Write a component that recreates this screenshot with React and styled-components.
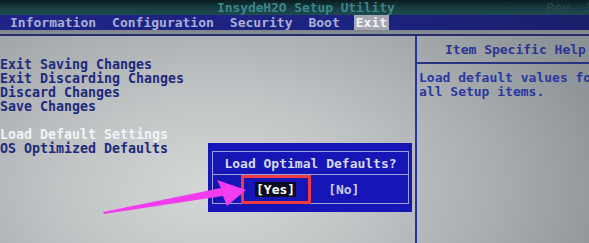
import React from "react";
import styled, { createGlobalStyle } from "styled-components";

const Global = createGlobalStyle`
  html, body { margin: 0; padding: 0; background: #8e9398; }
  body { width: 589px; height: 243px; overflow: hidden; }
`;

const mono = `"DejaVu Sans Mono", "Liberation Mono", monospace`;

const Screen = styled.div`
  position: relative;
  width: 589px;
  height: 243px;
  overflow: hidden;
  display: flex;
  flex-direction: column;
  font-family: ${mono};
  font-weight: bold;
  font-size: 13px;
  background:
    radial-gradient(ellipse 420px 260px at 36% 78%, #d5d7d7 0%, #c2c5c6 35%, #a7abae 70%, #8c9196 100%);
`;

const TitleBar = styled.div`
  height: 15px;
  flex: none;
  display: flex;
  align-items: center;
  background: linear-gradient(180deg, #0b1c20 0%, #183e42 55%, #1f4a4f 100%);
  color: #3c8688;
  line-height: 15px;
  white-space: nowrap;
`;

const Title = styled.span`
  margin-left: 217px;
  letter-spacing: -0.1px;
`;

const Rev = styled.span`
  margin-left: auto;
  margin-right: -20px;
  color: #28494c;
  font-weight: normal;
`;

const MenuBar = styled.div`
  height: 15px;
  flex: none;
  display: flex;
  align-items: center;
  gap: 16px;
  padding-left: 10px;
  background: linear-gradient(90deg, #1f2486 0%, #1d2380 60%, #1a1f6a 100%);
  color: #a9afd6;
  line-height: 15px;
  white-space: nowrap;
`;

const MenuItem = styled.span`
  padding: 0 ${(p) => (p.$active ? "2px" : "0")};
  margin: 0 ${(p) => (p.$active ? "-2px" : "0")};
  background: ${(p) => (p.$active ? "#a3a7b2" : "transparent")};
  color: ${(p) => (p.$active ? "#f4f4f8" : "#a9afd6")};
`;

const Gap = styled.div`
  height: 4px;
  flex: none;
  background: linear-gradient(180deg, #7f848c, #8b9096);
`;

const Body = styled.div`
  flex: 1;
  display: grid;
  grid-template-columns: 415px 2px 1fr;
  border-top: 2px solid #252c6c;
  min-height: 0;
`;

const LeftPanel = styled.div`
  position: relative;
  padding-top: 22px;
  font-size: 13.3px;
`;

const Item = styled.div`
  height: 14px;
  line-height: 14px;
  white-space: nowrap;
  color: ${(p) => (p.$selected ? "#f2f3f6" : "#1e2a7c")};
`;

const Divider = styled.div`
  background: #2435a6;
`;

const RightPanel = styled.div`
  display: flex;
  flex-direction: column;
  white-space: nowrap;
  overflow: hidden;
`;

const HelpHeader = styled.div`
  height: 26px;
  padding-left: 28px;
  display: flex;
  align-items: center;
  color: #2a3492;
  border-bottom: 2px solid #2a3380;
`;

const HelpText = styled.div`
  padding: 7px 0 0 2px;
  line-height: 14px;
  color: #2a38a0;
`;

const Dialog = styled.div`
  position: absolute;
  left: 208px;
  top: 107px;
  width: 197px;
  height: 53px;
  padding: 8px 3px 8px 4px;
  background: #1616b6;
  font-size: 13px;
`;

const DialogInner = styled.div`
  height: 51px;
  border: 1px solid #9aa0dc;
  display: flex;
  flex-direction: column;
`;

const DialogTitle = styled.div`
  height: 22px;
  display: flex;
  align-items: center;
  justify-content: center;
  color: #d6daf2;
  border-bottom: 1px solid #9aa0dc;
`;

const Buttons = styled.div`
  flex: 1;
  display: flex;
  align-items: center;
  gap: 31px;
  padding-left: 42px;
`;

const Button = styled.span`
  position: relative;
  line-height: 15px;
  padding: 0 1px;
  color: ${(p) => (p.$focused ? "#ffffff" : "#c8cdf0")};
  background: ${(p) => (p.$focused ? "#0b0b22" : "transparent")};

  ${(p) =>
    p.$focused &&
    `
    &::after {
      content: "";
      position: absolute;
      left: -14px;
      right: -15px;
      top: -7px;
      bottom: -7px;
      border: 3px solid #ef3b3f;
    }
  `}
`;

const ArrowLayer = styled.svg`
  position: absolute;
  left: 0;
  top: 0;
  pointer-events: none;
`;

export default function App() {
  return (
    <>
      <Global />
      <Screen>
        <TitleBar>
          <Title>InsydeH2O Setup Utility</Title>
          <Rev>Rev. 3.7</Rev>
        </TitleBar>
        <MenuBar>
          <MenuItem>Information</MenuItem>
          <MenuItem>Configuration</MenuItem>
          <MenuItem>Security</MenuItem>
          <MenuItem>Boot</MenuItem>
          <MenuItem $active>Exit</MenuItem>
        </MenuBar>
        <Gap />
        <Body>
          <LeftPanel>
            <Item>Exit Saving Changes</Item>
            <Item>Exit Discarding Changes</Item>
            <Item>Discard Changes</Item>
            <Item>Save Changes</Item>
            <Item />
            <Item $selected>Load Default Settings</Item>
            <Item>OS Optimized Defaults</Item>
            <Dialog>
              <DialogInner>
                <DialogTitle>Load Optimal Defaults?</DialogTitle>
                <Buttons>
                  <Button $focused>[Yes]</Button>
                  <Button>[No]</Button>
                </Buttons>
              </DialogInner>
            </Dialog>
          </LeftPanel>
          <Divider />
          <RightPanel>
            <HelpHeader>Item Specific Help</HelpHeader>
            <HelpText>
              Load default values for
              <br />
              all Setup items.
            </HelpText>
          </RightPanel>
        </Body>
        <ArrowLayer width="589" height="243" viewBox="0 0 589 243">
          <polygon
            points="103,212 221,188 217,180 246,190 227,206 223,196 104,214"
            fill="#f23cef"
          />
        </ArrowLayer>
      </Screen>
    </>
  );
}
